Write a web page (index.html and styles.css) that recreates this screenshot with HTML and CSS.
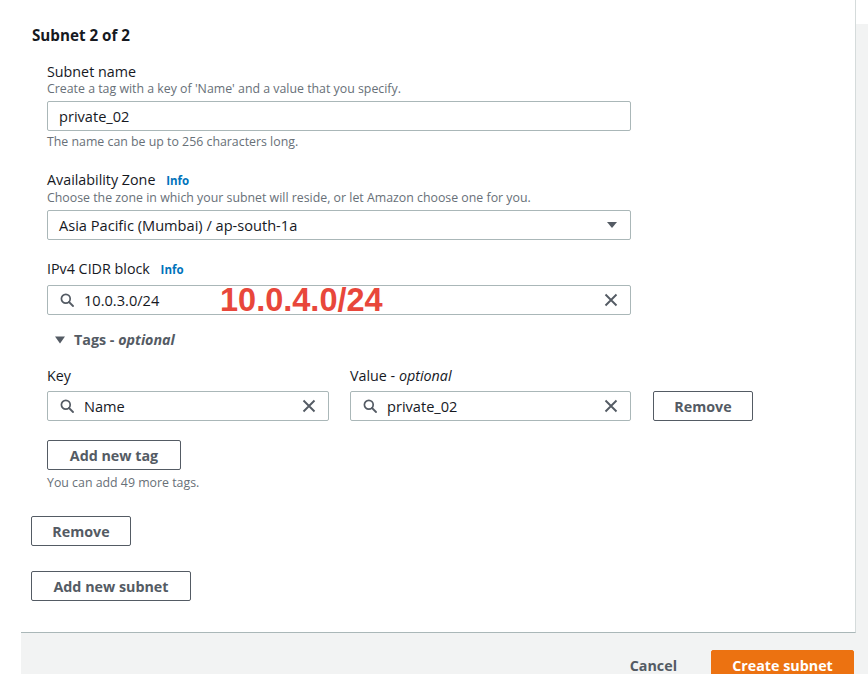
FILE: index.html
```html
<!DOCTYPE html>
<html lang="en">
<head>
<meta charset="utf-8">
<title>Create subnet</title>
<link rel="stylesheet" href="styles.css">
</head>
<body>
<div class="page">
  <div class="top">
    <section class="card">
      <h2 class="title">Subnet 2 of 2</h2>
      <div class="fields">
        <div class="label">Subnet name</div>
        <div class="desc">Create a tag with a key of 'Name' and a value that you specify.</div>
        <div class="input wide gap5"><span class="val">private_02</span></div>
        <div class="hint">The name can be up to 256 characters long.</div>

        <div class="label mt21">Availability Zone <a class="info">Info</a></div>
        <div class="desc">Choose the zone in which your subnet will reside, or let Amazon choose one for you.</div>
        <div class="input wide gap4">
          <span class="val">Asia Pacific (Mumbai) / ap-south-1a</span>
          <svg class="caret" width="12" height="8" viewBox="0 0 12 8"><path d="M1 1h10L6 7z" fill="#545b64"/></svg>
        </div>

        <div class="label mt20">IPv4 CIDR block <a class="info">Info</a></div>
        <div class="input wide gap6 anchor">
          <svg class="search" width="14" height="14" viewBox="0 0 14 14"><circle cx="5.8" cy="5.8" r="4.4" fill="none" stroke="#545b64" stroke-width="1.7"/><path d="M9 9l4 4" stroke="#545b64" stroke-width="1.8" stroke-linecap="round"/></svg>
          <span class="val">10.0.3.0/24</span>
          <svg class="clear" width="14" height="14" viewBox="0 0 14 14"><path d="M1.5 1.5l11 11M12.5 1.5l-11 11" stroke="#545b64" stroke-width="1.9"/></svg>
          <span class="annot">10.0.4.0/24</span>
        </div>

        <div class="tags-toggle">
          <svg width="10" height="8" viewBox="0 0 10 8"><path d="M0 0.5h10L5 7.5z" fill="#545b64"/></svg>
          <span>Tags - <i>optional</i></span>
        </div>

        <div class="tag-row">
          <div class="tag-col key">
            <div class="label">Key</div>
            <div class="input">
              <svg class="search" width="14" height="14" viewBox="0 0 14 14"><circle cx="5.8" cy="5.8" r="4.4" fill="none" stroke="#545b64" stroke-width="1.7"/><path d="M9 9l4 4" stroke="#545b64" stroke-width="1.8" stroke-linecap="round"/></svg>
              <span class="val">Name</span>
              <svg class="clear" width="14" height="14" viewBox="0 0 14 14"><path d="M1.5 1.5l11 11M12.5 1.5l-11 11" stroke="#545b64" stroke-width="1.9"/></svg>
            </div>
          </div>
          <div class="tag-col value">
            <div class="label">Value - <i>optional</i></div>
            <div class="input">
              <svg class="search" width="14" height="14" viewBox="0 0 14 14"><circle cx="5.8" cy="5.8" r="4.4" fill="none" stroke="#545b64" stroke-width="1.7"/><path d="M9 9l4 4" stroke="#545b64" stroke-width="1.8" stroke-linecap="round"/></svg>
              <span class="val">private_02</span>
              <svg class="clear" width="14" height="14" viewBox="0 0 14 14"><path d="M1.5 1.5l11 11M12.5 1.5l-11 11" stroke="#545b64" stroke-width="1.9"/></svg>
            </div>
          </div>
          <button class="btn btn-remove-tag">Remove</button>
        </div>

        <button class="btn btn-addtag">Add new tag</button>
        <div class="hint mt5">You can add 49 more tags.</div>
      </div>
      <button class="btn btn-remove">Remove</button>
      <button class="btn btn-addsubnet">Add new subnet</button>
    </section>
    <div class="side"></div>
  </div>
  <footer class="footer">
    <button class="cancel">Cancel</button>
    <button class="primary">Create subnet</button>
  </footer>
</div>
</body>
</html>
```

FILE: styles.css
```css
html, body {
  margin: 0;
  padding: 0;
  background: #ffffff;
  height: 100%;
  overflow: hidden;
}
body {
  font-family: "Open Sans", "Noto Sans", sans-serif;
  color: #16191f;
}
.page {
  display: flex;
  flex-direction: column;
  padding-left: 21px;
  height: 674px;
}
.top {
  display: flex;
}
.card {
  width: 824px;
  padding: 25px 0 31px 10px;
  background: #fff;
  border-right: 1px solid #d5dbdb;
  border-bottom: 1px solid #aab7b8;
  display: flex;
  flex-direction: column;
  align-items: flex-start;
}
.side {
  flex: 1;
  margin-top: 24px;
  background: #f2f3f3;
}
.title {
  margin: 0 0 0 1px;
  font-size: 15.2px;
  line-height: 20px;
  font-weight: 700;
}
.fields {
  margin-left: 16px;
  margin-top: 18px;
  display: flex;
  flex-direction: column;
  align-items: flex-start;
}
.label {
  font-size: 14.3px;
  line-height: 18px;
  color: #16191f;
}
.info {
  color: #0073bb;
  font-weight: 700;
  font-size: 11.5px;
  margin-left: 7px;
}
.desc, .hint {
  font-size: 12.35px;
  line-height: 16px;
  color: #687078;
}
.hint { margin-top: 3px; }
.mt21 { margin-top: 21px; }
.mt20 { margin-top: 20px; }
.mt5 { margin-top: 5px; }
.gap4 { margin-top: 4px; }
.gap5 { margin-top: 4px; }
.gap6 { margin-top: 6px; }
.input {
  box-sizing: border-box;
  height: 30px;
  border: 1px solid #aab7b8;
  border-radius: 2px;
  display: flex;
  align-items: center;
  padding: 0 11px 0 11px;
  font-size: 14.6px;
  color: #16191f;
  background: #fff;
}
.input.wide { width: 584px; }
.input .val { flex: 1; }
.input .search { margin-right: 10px; margin-left: 1px; }
.input .clear { margin-right: 1px; }
.input .caret { margin-right: 1px; }
.anchor { position: relative; }
.annot {
  position: absolute;
  left: 172px;
  top: -4px;
  font-family: "Liberation Sans", Arial, sans-serif;
  font-weight: 700;
  font-size: 32.5px;
  line-height: 36px;
  color: #e8473b;
}
.tags-toggle {
  margin-top: 16px;
  margin-left: 8px;
  display: flex;
  align-items: center;
  gap: 9px;
  font-size: 14.3px;
  line-height: 18px;
  font-weight: 700;
  color: #545b64;
}
.tag-row {
  margin-top: 18px;
  display: flex;
  align-items: flex-end;
}
.tag-col { display: flex; flex-direction: column; }
.tag-col .input { margin-top: 6px; }
.tag-col.key .input { width: 282px; }
.tag-col.value { margin-left: 21px; }
.tag-col.value .input { width: 281px; }
.btn {
  box-sizing: border-box;
  height: 30px;
  background: #fff;
  border: 1px solid #545b64;
  border-radius: 2px;
  font-family: "Open Sans", "Noto Sans", sans-serif;
  font-weight: 700;
  font-size: 14.3px;
  color: #545b64;
  padding: 0;
}
.btn-remove-tag { width: 100px; margin-left: 22px; }
.btn-addtag { width: 134px; margin-top: 19px; }
.btn-remove { width: 100px; margin-top: 25px; }
.btn-addsubnet { width: 160px; margin-top: 25px; }
.footer {
  flex: 1;
  background: #f2f3f3;
  display: flex;
  justify-content: flex-end;
  align-items: flex-start;
  padding: 17px 14px 0 0;
}
.cancel {
  background: none;
  border: none;
  font-family: "Open Sans", "Noto Sans", sans-serif;
  font-weight: 700;
  font-size: 14.3px;
  color: #545b64;
  height: 30px;
  padding: 0;
  margin-right: 34px;
}
.primary {
  width: 143px;
  height: 30px;
  background: #ec7211;
  border: 1px solid #ec7211;
  border-radius: 2px;
  color: #fff;
  font-family: "Open Sans", "Noto Sans", sans-serif;
  font-weight: 700;
  font-size: 14.3px;
  padding: 0;
}
```
